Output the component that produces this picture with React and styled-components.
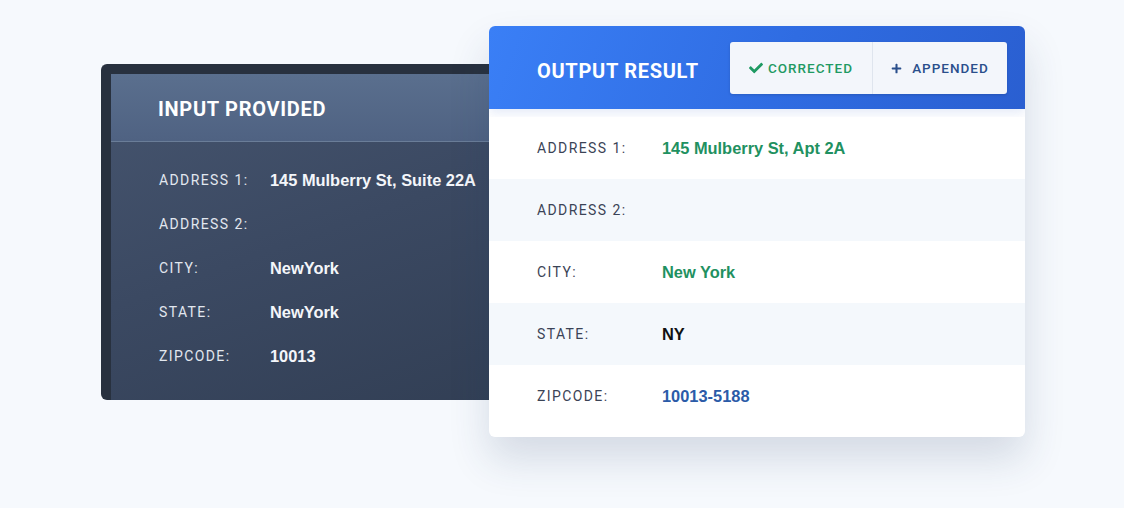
import React from 'react';
import styled, { createGlobalStyle } from 'styled-components';
import { FaCheck, FaPlus } from 'react-icons/fa';

const GlobalStyle = createGlobalStyle`
  html, body {
    margin: 0;
    padding: 0;
    background: #f6f9fd;
    font-family: Roboto, "Liberation Sans", sans-serif;
  }
`;

const Page = styled.div`
  display: flex;
  align-items: flex-start;
  width: 1124px;
  height: 508px;
  padding: 26px 0 0 101px;
  box-sizing: border-box;
  overflow: hidden;
`;

const InputCard = styled.div`
  margin-top: 38px;
  width: 400px;
  height: 336px;
  box-sizing: border-box;
  border-top: 10px solid #28313f;
  border-left: 10px solid #28313f;
  border-radius: 6px;
  background: linear-gradient(160deg, #46556f 0%, #3b4962 50%, #323f55 100%);
  overflow: hidden;
  display: flex;
  flex-direction: column;
`;

const InputHeader = styled.div`
  height: 67px;
  display: flex;
  align-items: center;
  padding-left: 47px;
  background: linear-gradient(180deg, #5a6f8e 0%, #4f6282 100%);
  border-bottom: 1px solid #6a7d98;
`;

const Title = styled.h2`
  margin: ${p => p.$shift}px 0 0;
  font-family: Roboto, "Liberation Sans", sans-serif;
  font-weight: 700;
  font-size: 20px;
  letter-spacing: 0.7px;
  color: #ffffff;
`;

const InputBody = styled.div`
  padding: 16px 0 0 48px;
`;

const InputRow = styled.div`
  display: flex;
  align-items: center;
  height: 44px;
`;

const Label = styled.span`
  width: ${p => p.$w}px;
  flex-shrink: 0;
  font-family: Roboto, "Liberation Sans", sans-serif;
  font-size: 14px;
  letter-spacing: 1.4px;
  color: ${p => p.$dark ? '#3b4356' : '#e2e7ef'};
`;

const Value = styled.span`
  font-family: "Liberation Sans", Arial, sans-serif;
  font-weight: 700;
  font-size: 16.4px;
  color: ${p => p.$color};
`;

const OutputCard = styled.div`
  position: relative;
  z-index: 1;
  margin-left: -12px;
  width: 536px;
  height: 411px;
  background: #ffffff;
  border-radius: 6px;
  box-shadow: 0 22px 40px rgba(40, 60, 100, 0.16);
  overflow: hidden;
  display: flex;
  flex-direction: column;
`;

const OutputHeader = styled.div`
  height: 83px;
  flex-shrink: 0;
  display: flex;
  align-items: center;
  justify-content: space-between;
  padding: 0 18px 0 48px;
  background: linear-gradient(110deg, #3a7ff6 0%, #2f6ce2 55%, #2a5fd1 100%);
  box-shadow: 0 4px 10px rgba(40, 90, 200, 0.12);
`;

const Tags = styled.div`
  display: flex;
  height: 52px;
  margin-top: 1px;
  background: #f3f6fb;
  border-radius: 3px;
  box-shadow: 0 1px 3px rgba(0, 0, 0, 0.15);
`;

const Tag = styled.div`
  display: flex;
  align-items: center;
  justify-content: center;
  gap: ${p => p.$gap}px;
  width: ${p => p.$w}px;
  font-family: Roboto, "Liberation Sans", sans-serif;
  font-weight: 500;
  font-size: 13.5px;
  letter-spacing: 1px;
  color: ${p => p.$color};
  & + & {
    border-left: 1px solid #dfe5ee;
  }
  svg {
    font-size: ${p => p.$icon}px;
  }
`;

const OutputBody = styled.div`
  padding: 8px 0 9px;
`;

const OutputRow = styled.div`
  display: flex;
  align-items: center;
  height: 62px;
  padding-left: 48px;
  background: ${p => p.$alt ? '#f4f8fc' : '#ffffff'};
`;

const inputRows = [
  { label: 'ADDRESS 1:', value: '145 Mulberry St, Suite 22A' },
  { label: 'ADDRESS 2:', value: '' },
  { label: 'CITY:', value: 'NewYork' },
  { label: 'STATE:', value: 'NewYork' },
  { label: 'ZIPCODE:', value: '10013' },
];

const outputRows = [
  { label: 'ADDRESS 1:', value: '145 Mulberry St, Apt 2A', color: '#1f9161' },
  { label: 'ADDRESS 2:', value: '', color: '#1f9161' },
  { label: 'CITY:', value: 'New York', color: '#1f9161' },
  { label: 'STATE:', value: 'NY', color: '#111111' },
  { label: 'ZIPCODE:', value: '10013-5188', color: '#2b5ba8' },
];

export default function App() {
  return (
    <>
      <GlobalStyle />
      <Page>
        <InputCard>
          <InputHeader>
            <Title $shift={3}>INPUT PROVIDED</Title>
          </InputHeader>
          <InputBody>
            {inputRows.map(r => (
              <InputRow key={r.label}>
                <Label $w={111}>{r.label}</Label>
                <Value $color="#f4f6fa">{r.value}</Value>
              </InputRow>
            ))}
          </InputBody>
        </InputCard>

        <OutputCard>
          <OutputHeader>
            <Title $shift={6}>OUTPUT RESULT</Title>
            <Tags>
              <Tag $w={142} $gap={5} $icon={14} $color="#1f9a63">
                <FaCheck />
                CORRECTED
              </Tag>
              <Tag $w={134} $gap={10} $icon={11} $color="#2a4f8c">
                <FaPlus />
                APPENDED
              </Tag>
            </Tags>
          </OutputHeader>
          <OutputBody>
            {outputRows.map((r, i) => (
              <OutputRow key={r.label} $alt={i % 2 === 1}>
                <Label $w={125} $dark>{r.label}</Label>
                <Value $color={r.color}>{r.value}</Value>
              </OutputRow>
            ))}
          </OutputBody>
        </OutputCard>
      </Page>
    </>
  );
}
